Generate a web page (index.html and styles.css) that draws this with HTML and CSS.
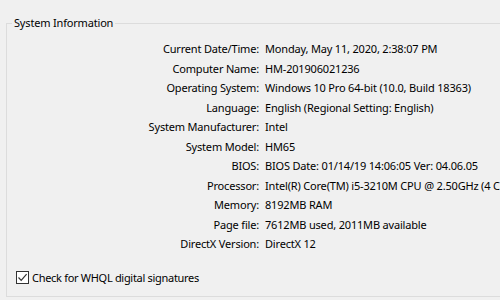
FILE: index.html
```html
<!DOCTYPE html>
<html>
<head>
<meta charset="utf-8">
<link rel="stylesheet" href="styles.css">
</head>
<body>
<fieldset class="group">
  <legend class="group-title">System Information</legend>
  <div class="info">
    <div class="label">Current Date/Time:</div><div class="value">Monday, May 11, 2020, 2:38:07 PM</div>
    <div class="label">Computer Name:</div><div class="value">HM-201906021236</div>
    <div class="label">Operating System:</div><div class="value">Windows 10 Pro 64-bit (10.0, Build 18363)</div>
    <div class="label">Language:</div><div class="value">English (Regional Setting: English)</div>
    <div class="label">System Manufacturer:</div><div class="value">Intel</div>
    <div class="label">System Model:</div><div class="value">HM65</div>
    <div class="label">BIOS:</div><div class="value">BIOS Date: 01/14/19 14:06:05 Ver: 04.06.05</div>
    <div class="label">Processor:</div><div class="value">Intel(R) Core(TM) i5-3210M CPU @ 2.50GHz (4 CPUs), ~2.5GHz</div>
    <div class="label">Memory:</div><div class="value">8192MB RAM</div>
    <div class="label">Page file:</div><div class="value">7612MB used, 2011MB available</div>
    <div class="label">DirectX Version:</div><div class="value">DirectX 12</div>
  </div>
  <label class="check">
    <span class="box"><svg width="11" height="11" viewBox="0 0 11 11"><path d="M1.5 5.5 L4.2 8.3 L9.6 2.2" fill="none" stroke="#333" stroke-width="1.2"/></svg></span>
    <span class="check-text">Check for WHQL digital signatures</span>
  </label>
</fieldset>
</body>
</html>
```
FILE: styles.css
```css
html, body {
  margin: 0;
  padding: 0;
  background: #f0f0f0;
  overflow: hidden;
  width: 500px;
  height: 300px;
}
body {
  font-family: "Noto Sans", "DejaVu Sans", sans-serif;
  font-size: 11px;
  letter-spacing: -0.18px;
  color: #000;
}
.group {
  margin: 15px 0 0 6px;
  padding: 8px 0 0 0;
  width: 540px;
  height: 282px;
  box-sizing: border-box;
  border: 1px solid #dcdcdc;
  min-width: 0;
}
.group-title {
  margin-left: 5px;
  padding: 0 2px;
  line-height: 16px;
  height: 16px;
}
.info {
  display: grid;
  grid-template-columns: 252px auto;
  grid-auto-rows: 19.5px;
  column-gap: 6px;
  align-items: center;
  white-space: nowrap;
}
.label {
  text-align: right;
}
.check {
  display: flex;
  align-items: center;
  gap: 3px;
  margin: 16px 0 0 9px;
  height: 16px;
}
.check-text {
  letter-spacing: -0.3px;
}
.box {
  width: 11px;
  height: 11px;
  border: 1px solid #333;
  background: #fff;
  display: flex;
}
```
